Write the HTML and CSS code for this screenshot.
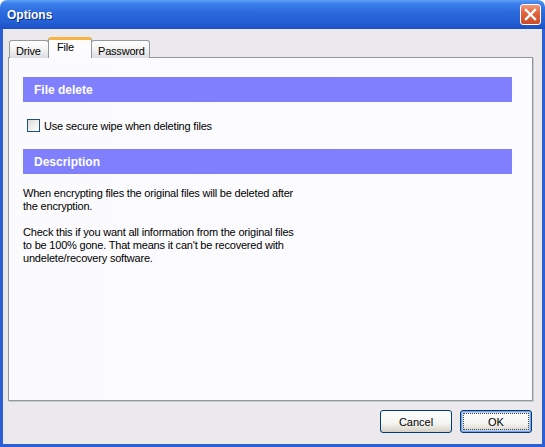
FILE: index.html
```html
<!DOCTYPE html>
<html lang="en">
<head>
  <meta charset="UTF-8">
  <title>Options</title>
  <link rel="stylesheet" href="styles.css">
</head>
<body>
  <div class="window">
    <div class="titlebar">
      <span class="title">Options</span>
      <div class="close">
        <svg width="13" height="13" viewBox="0 0 13 13">
          <path d="M2 2 L11 11 M11 2 L2 11" stroke="#fff" stroke-width="2.4" stroke-linecap="square"/>
        </svg>
      </div>
    </div>

    <div class="content">
      <!-- Tabs -->
      <div class="tabs">
        <div class="tab tab-drive">Drive</div>
        <div class="tab tab-file active">File</div>
        <div class="tab tab-password">Password</div>
      </div>

      <div class="panel">
        <div class="section-bar">File delete</div>
        <label class="check-row">
          <span class="checkbox"></span>
          <span>Use secure wipe when deleting files</span>
        </label>

        <div class="section-bar">Description</div>
        <div class="description">
          <p>When encrypting files the original files will be deleted after<br>the encryption.</p>
          <p>Check this if you want all information from the original files<br>to be 100% gone. That means it can't be recovered with<br>undelete/recovery software.</p>
        </div>
      </div>

      <div class="buttons">
        <button class="button">Cancel</button>
        <button class="button default">OK</button>
      </div>
    </div>
  </div>
</body>
</html>
```

FILE: styles.css
```css
body {
  margin: 0;
  font-family: "Liberation Sans", Arial, sans-serif;
  font-size: 11px;
  letter-spacing: -0.2px;
  background: #fff;
}
.window {
  width: 545px;
  height: 447px;
  display: flex;
  flex-direction: column;
  box-sizing: border-box;
}
.titlebar {
  height: 29px;
  flex: none;
  display: flex;
  align-items: center;
  justify-content: space-between;
  padding: 0 4px 0 7px;
  border-radius: 7px 7px 0 0;
  background: linear-gradient(to bottom, #5f9ff5 0%, #3b80ec 12%, #2a68dc 45%, #2460d6 75%, #1b4ec4 100%);
}
.title {
  color: #fff;
  font-weight: bold;
  font-size: 12px;
  letter-spacing: 0;
  text-shadow: 1px 1px 0 #0b2e8a;
}
.close {
  width: 21px;
  height: 21px;
  box-sizing: border-box;
  border: 1px solid #fff;
  border-radius: 3px;
  background: linear-gradient(to bottom, #f09a7c 0%, #e2663f 40%, #cc4a24 100%);
  display: flex;
  align-items: center;
  justify-content: center;
}
.content {
  flex: 1;
  display: flex;
  flex-direction: column;
  background: #ece9ec;
  border: 3px solid #2a5fd6;
  border-top: none;
  padding: 8px 8px 0 5px;
}
.tabs {
  display: flex;
  align-items: flex-end;
  padding-left: 1px;
  margin-bottom: -1px;
  position: relative;
  z-index: 1;
}
.tab {
  height: 18px;
  box-sizing: border-box;
  border: 1px solid #919b9c;
  border-bottom: none;
  border-radius: 3px 3px 0 0;
  background: linear-gradient(to bottom, #ffffff 0%, #f3f3f0 50%, #dcdde4 100%);
  font-size: 11px;
  line-height: 18px;
  padding-top: 1px;
  color: #000;
}
.tab-drive {
  width: 40px;
  padding-left: 6px;
}
.tab-file {
  width: 44px;
  margin-left: -1px;
  padding-left: 8px;
}
.tab-password {
  width: 59px;
  margin-left: -1px;
  padding-left: 6px;
}
.tab.active {
  height: 21px;
  background: #fcfcfe;
  border-top: 3px solid #f9b343;
  line-height: 14px;
  padding-top: 0;
  position: relative;
  z-index: 2;
}
.panel {
  height: 344px;
  box-sizing: border-box;
  border: 1px solid #919b9c;
  border-right-color: #8d96a0;
  box-shadow: 1px 1px 0 #c6c9d2;
  background: linear-gradient(to right, #fbfbfd 0%, #fcfcfe 100%);
  width: 525px;
  padding: 19px 20px 0 14px;
}
.section-bar {
  height: 25px;
  background: #8080ff;
  color: #fff;
  font-weight: bold;
  font-size: 12px;
  letter-spacing: 0;
  line-height: 26px;
  padding-left: 11px;
}
.check-row {
  display: flex;
  align-items: center;
  gap: 4px;
  margin: 17px 0 17px 4px;
  height: 13px;
}
.checkbox {
  width: 13px;
  height: 13px;
  box-sizing: border-box;
  border: 1px solid #1c5180;
  background: linear-gradient(135deg, #dcdcd7 0%, #f4f4f1 70%, #ffffff 100%);
}
.description {
  margin-top: 13px;
  line-height: 13px;
}
.description p {
  margin: 0 0 13px 0;
}
.buttons {
  display: flex;
  justify-content: flex-end;
  gap: 8px;
  padding-top: 9px;
  padding-right: 2px;
}
.button {
  width: 72px;
  height: 23px;
  font-family: "Liberation Sans", Arial, sans-serif;
  font-size: 11px;
  color: #000;
  border: 1px solid #003c74;
  border-radius: 3px;
  background: linear-gradient(to bottom, #ffffff 0%, #f4f4f0 60%, #d6d0c5 100%);
  padding: 0;
}
.button.default {
  box-shadow: inset 0 0 0 1px #7aa1ea, inset 0 0 0 2px #b9d0f6;
  outline: 1px dotted #444;
  outline-offset: -4px;
}
```
